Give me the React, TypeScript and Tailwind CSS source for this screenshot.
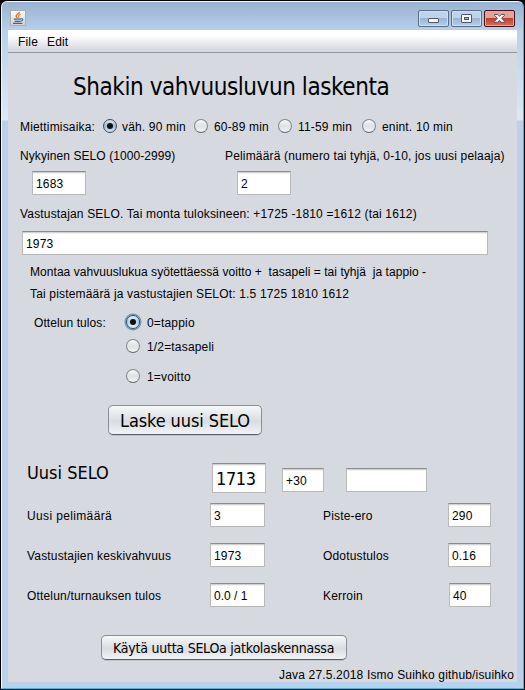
import React from "react";

const ui = "font-['Liberation_Sans',Arial,sans-serif] text-[12px] leading-[16px] tracking-[0.17px]";
const tahoma = "font-['DejaVu_Sans_Condensed','DejaVu_Sans',sans-serif] [font-stretch:condensed]";

function Label({ children, className = "" }: { children: React.ReactNode; className?: string }) {
  return <span className={`block shrink-0 whitespace-pre ${className}`}>{children}</span>;
}

function Field({ value, className = "" }: { value: string; className?: string }) {
  return (
    <input
      readOnly
      value={value}
      className={`block h-6 shrink-0 border border-[#b9b9b9] border-t-[#8c8c8c] bg-white pl-[3px] shadow-[inset_0_1px_0_#d2d2d2,inset_0_2px_0_#f1f1f1] outline-none ${className}`}
    />
  );
}

function Radio({ checked = false, focused = false }: { checked?: boolean; focused?: boolean }) {
  return (
    <span
      className={`flex h-[14px] w-[14px] shrink-0 items-center justify-center rounded-full border ${
        focused
          ? "border-[#294d68] bg-linear-to-b from-[#e6f0f8] via-[#bdd0df] to-[#e0f0fa] shadow-[0_0_0_1.5px_#7396b4]"
          : checked
            ? "border-[#344d61] bg-linear-to-b from-[#dce6ee] via-[#a6bac9] to-[#d1e4f2]"
            : "border-[#85888e] border-b-[#63666c] bg-linear-to-b from-[#fafafb] via-[#dfe1e5] to-[#f3f4f6]"
      }`}
    >
      {checked && <span className="h-[6px] w-[6px] rounded-full bg-[#0c1116]" />}
    </span>
  );
}

function Push({ children, className = "" }: { children: React.ReactNode; className?: string }) {
  return (
    <button
      className={`block shrink-0 whitespace-nowrap rounded-[5px] border border-[#8b8e94] border-b-[#5a5d63] bg-linear-to-b from-[#f7f8f9] via-[#d9dce2] via-55% to-[#f3f4f7] text-left text-black shadow-[0_1px_0_#c0c3ca] ${tahoma} ${className}`}
    >
      {children}
    </button>
  );
}

function JavaIcon() {
  return (
    <svg width="16" height="16" viewBox="0 0 16 16" className="block shrink-0">
      <defs>
        <linearGradient id="tile" x1="0" y1="0" x2="0" y2="1">
          <stop offset="0" stopColor="#fdfdfd" />
          <stop offset="1" stopColor="#cfd0d2" />
        </linearGradient>
      </defs>
      <rect x="0.5" y="0.5" width="15" height="15" fill="url(#tile)" stroke="#a9acb0" />
      <path d="M9.4 1.8C9.8 4 5.6 4.2 6.2 6.2C6.4 7 7 7.4 7.3 8" fill="none" stroke="#e8761c" strokeWidth="1.5" />
      <path d="M10.8 4C8.5 5 8 5.6 8.8 6.6C9.2 7.2 9 7.6 8.4 8.2" fill="none" stroke="#ee8a3c" strokeWidth="1.2" />
      <path d="M3.8 9.2H11M4.6 11.3H10.6M3 13.4H12.4" fill="none" stroke="#3f678c" strokeWidth="1.2" />
      <path d="M11 8.8C13.8 8.2 13.2 10.8 10.8 11.3" fill="none" stroke="#3f678c" strokeWidth="1.1" />
    </svg>
  );
}

function WindowButton({ kind }: { kind: "min" | "max" | "close" }) {
  const close = kind === "close";
  return (
    <span
      className={`flex h-[17px] w-[31px] items-center justify-center rounded-[2px] border ${
        close
          ? "border-[#4a0f18] bg-linear-to-b from-[#e2a398] from-45% via-[#bd402c] via-50% to-[#d57058] shadow-[inset_0_0_0_1px_#e6a79d]"
          : "border-[#596d8b] bg-linear-to-b from-[#bfd4ea] from-45% via-[#9ab5d3] via-50% to-[#b5d0ea] shadow-[inset_0_0_0_1px_#cfe0f1]"
      }`}
    >
      {kind === "min" && (
        <svg width="13" height="13" viewBox="0 0 13 13">
          <rect x="1.5" y="6.5" width="10" height="4" rx="0.5" fill="#f7f7f7" stroke="#535666" />
        </svg>
      )}
      {kind === "max" && (
        <svg width="13" height="13" viewBox="0 0 13 13">
          <rect x="1.5" y="2.5" width="10" height="8" rx="0.5" fill="#f7f7f7" stroke="#535666" />
          <rect x="4.5" y="5.5" width="4" height="2" fill="#9ab5d3" stroke="#535666" />
        </svg>
      )}
      {close && (
        <svg width="13" height="13" viewBox="0 0 13 13">
          <path
            d="M1.5 2.5H4.7L6.5 4.3L8.3 2.5H11.5V3.3L8.7 6.3L11.5 9.3V10.3H8.3L6.5 8.4L4.7 10.3H1.5V9.3L4.3 6.3L1.5 3.3Z"
            fill="#f7f7f7"
            stroke="#535666"
          />
        </svg>
      )}
    </span>
  );
}

export default function App() {
  return (
    <div className={`h-[690px] w-[525px] overflow-hidden bg-black pt-px pl-px text-black ${ui}`}>
      <div className="flex h-[688px] w-[523px] flex-col rounded-t-[6px] border border-[#2bc4ea] border-t-[#f2f8fc] border-l-[#f0f7fc] bg-[linear-gradient(to_bottom,#98b3d1_0px,#b9d1ea_30px,#dce9f7_118px,#b9d1ea_119px)] px-1.5 pb-1.5">
        <header className="flex h-7 shrink-0 items-start">
          <div className="ml-0.5 pt-2">
            <JavaIcon />
          </div>
          <div className="mr-0.5 ml-auto flex gap-0.5 pt-2">
            <WindowButton kind="min" />
            <WindowButton kind="max" />
            <WindowButton kind="close" />
          </div>
        </header>

        <main className="flex h-[652px] shrink-0 flex-col bg-[#d6d9e0]">
          <nav className="flex h-[23px] shrink-0 border-b border-[#9297a1] bg-linear-to-b from-white from-25% to-[#d6d9e0] to-90% pt-1">
            <Label className="ml-2.5 w-[29px]">File</Label>
            <Label>Edit</Label>
          </nav>

          <h1
            className={`mt-5 ml-[65px] h-7 shrink-0 whitespace-nowrap text-[24px] leading-[28px] tracking-[-0.43px] ${tahoma}`}
          >
            Shakin vahvuusluvun laskenta
          </h1>

          <div className="mt-[17px] flex h-4 shrink-0 items-center pl-3">
            <Label className="w-[83px] pt-px">Miettimisaika:</Label>
            <Radio checked />
            <Label className="ml-[5px] w-[72px] pt-px">väh. 90 min</Label>
            <Radio />
            <Label className="ml-[6px] w-[64px] pt-px">60-89 min</Label>
            <Radio />
            <Label className="ml-[6px] w-[64px] pt-px">11-59 min</Label>
            <Radio />
            <Label className="ml-[6px] pt-px">enint. 10 min</Label>
          </div>

          <div className="mt-[14px] flex h-4 shrink-0 pl-3">
            <Label className="w-[205px] tracking-[0.08px]">Nykyinen SELO (1000-2999)</Label>
            <Label>Pelimäärä (numero tai tyhjä, 0-10, jos uusi pelaaja)</Label>
          </div>
          <div className="mt-[7px] flex h-6 shrink-0 gap-[151px] pl-6">
            <Field value="1683" className="w-[54px] pt-px" />
            <Field value="2" className="w-[54px] pt-px" />
          </div>

          <Label className="mt-[11px] ml-3">Vastustajan SELO. Tai monta tuloksineen: +1725 -1810 =1612 (tai 1612)</Label>
          <Field value="1973" className="mt-[9px] ml-3.5 w-[466px] pt-px" />

          <Label className="mt-[9px] ml-[22px] tracking-[0.05px]">
            {"Montaa vahvuuslukua syötettäessä voitto +  tasapeli = tai tyhjä  ja tappio -"}
          </Label>
          <Label className="mt-1.5 ml-[22px]">Tai pistemäärä ja vastustajien SELOt: 1.5 1725 1810 1612</Label>

          <div className="mt-[12px] flex h-[75px] shrink-0 pl-[26px]">
            <Label className="w-[92px] pt-px tracking-[0.08px]">Ottelun tulos:</Label>
            <div className="flex flex-col">
              <div className="flex h-4 shrink-0 items-center gap-[7px]">
                <Radio checked focused />
                <Label className="pt-0.5">0=tappio</Label>
              </div>
              <div className="mt-2 flex h-4 shrink-0 items-center gap-[7px]">
                <Radio />
                <Label className="pt-0.5">1/2=tasapeli</Label>
              </div>
              <div className="mt-[14px] flex h-4 shrink-0 items-center gap-[7px]">
                <Radio />
                <Label className="pt-0.5">1=voitto</Label>
              </div>
            </div>
          </div>

          <Push className="mt-4 ml-[100px] h-[30px] w-[154px] pl-[11px] text-[18px] leading-[29px] tracking-[-0.1px]">
            Laske uusi SELO
          </Push>

          <div className="mt-7 flex h-[30px] shrink-0 items-start pl-[19px]">
            <Label className={`w-[185px] text-[18px] leading-5 tracking-normal ${tahoma}`}>Uusi SELO</Label>
            <Field value="1713" className={`h-[30px] w-[54px] text-[18px] tracking-[-0.4px] ${tahoma}`} />
            <Field value="+30" className="mt-[5px] ml-4 w-[42px] pt-px" />
            <Field value="" className="mt-[5px] ml-[22px] w-[81px]" />
          </div>

          <div className="mt-2.5 flex h-6 shrink-0 pl-[19px]">
            <Label className="w-[183px] pt-[5px] tracking-[0.36px]">Uusi pelimäärä</Label>
            <Field value="3" className="w-[55px] pt-px" />
            <Label className="ml-[58px] w-[125px] pt-[5px]">Piste-ero</Label>
            <Field value="290" className="w-[43px] pt-px" />
          </div>
          <div className="mt-4 flex h-6 shrink-0 pl-[19px]">
            <Label className="w-[183px] pt-[5px]">Vastustajien keskivahvuus</Label>
            <Field value="1973" className="w-[55px] pt-px" />
            <Label className="ml-[58px] w-[125px] pt-[5px]">Odotustulos</Label>
            <Field value="0.16" className="w-[43px] pt-px" />
          </div>
          <div className="mt-4 flex h-6 shrink-0 pl-[19px]">
            <Label className="w-[183px] pt-[5px]">Ottelun/turnauksen tulos</Label>
            <Field value="0.0 / 1" className="w-[55px] pt-px tracking-normal" />
            <Label className="ml-[58px] w-[126px] pt-[5px]">Kerroin</Label>
            <Field value="40" className="w-[42px] pt-px" />
          </div>

          <Push className="mt-7 ml-[93px] h-[25px] w-[246px] pl-[11px] text-[14px] leading-[24px] tracking-[-0.23px]">
            Käytä uutta SELOa jatkolaskennassa
          </Push>
          <Label className="mt-[7px] ml-[271px] h-[15px]">Java 27.5.2018 Ismo Suihko github/isuihko</Label>
        </main>
      </div>
    </div>
  );
}
